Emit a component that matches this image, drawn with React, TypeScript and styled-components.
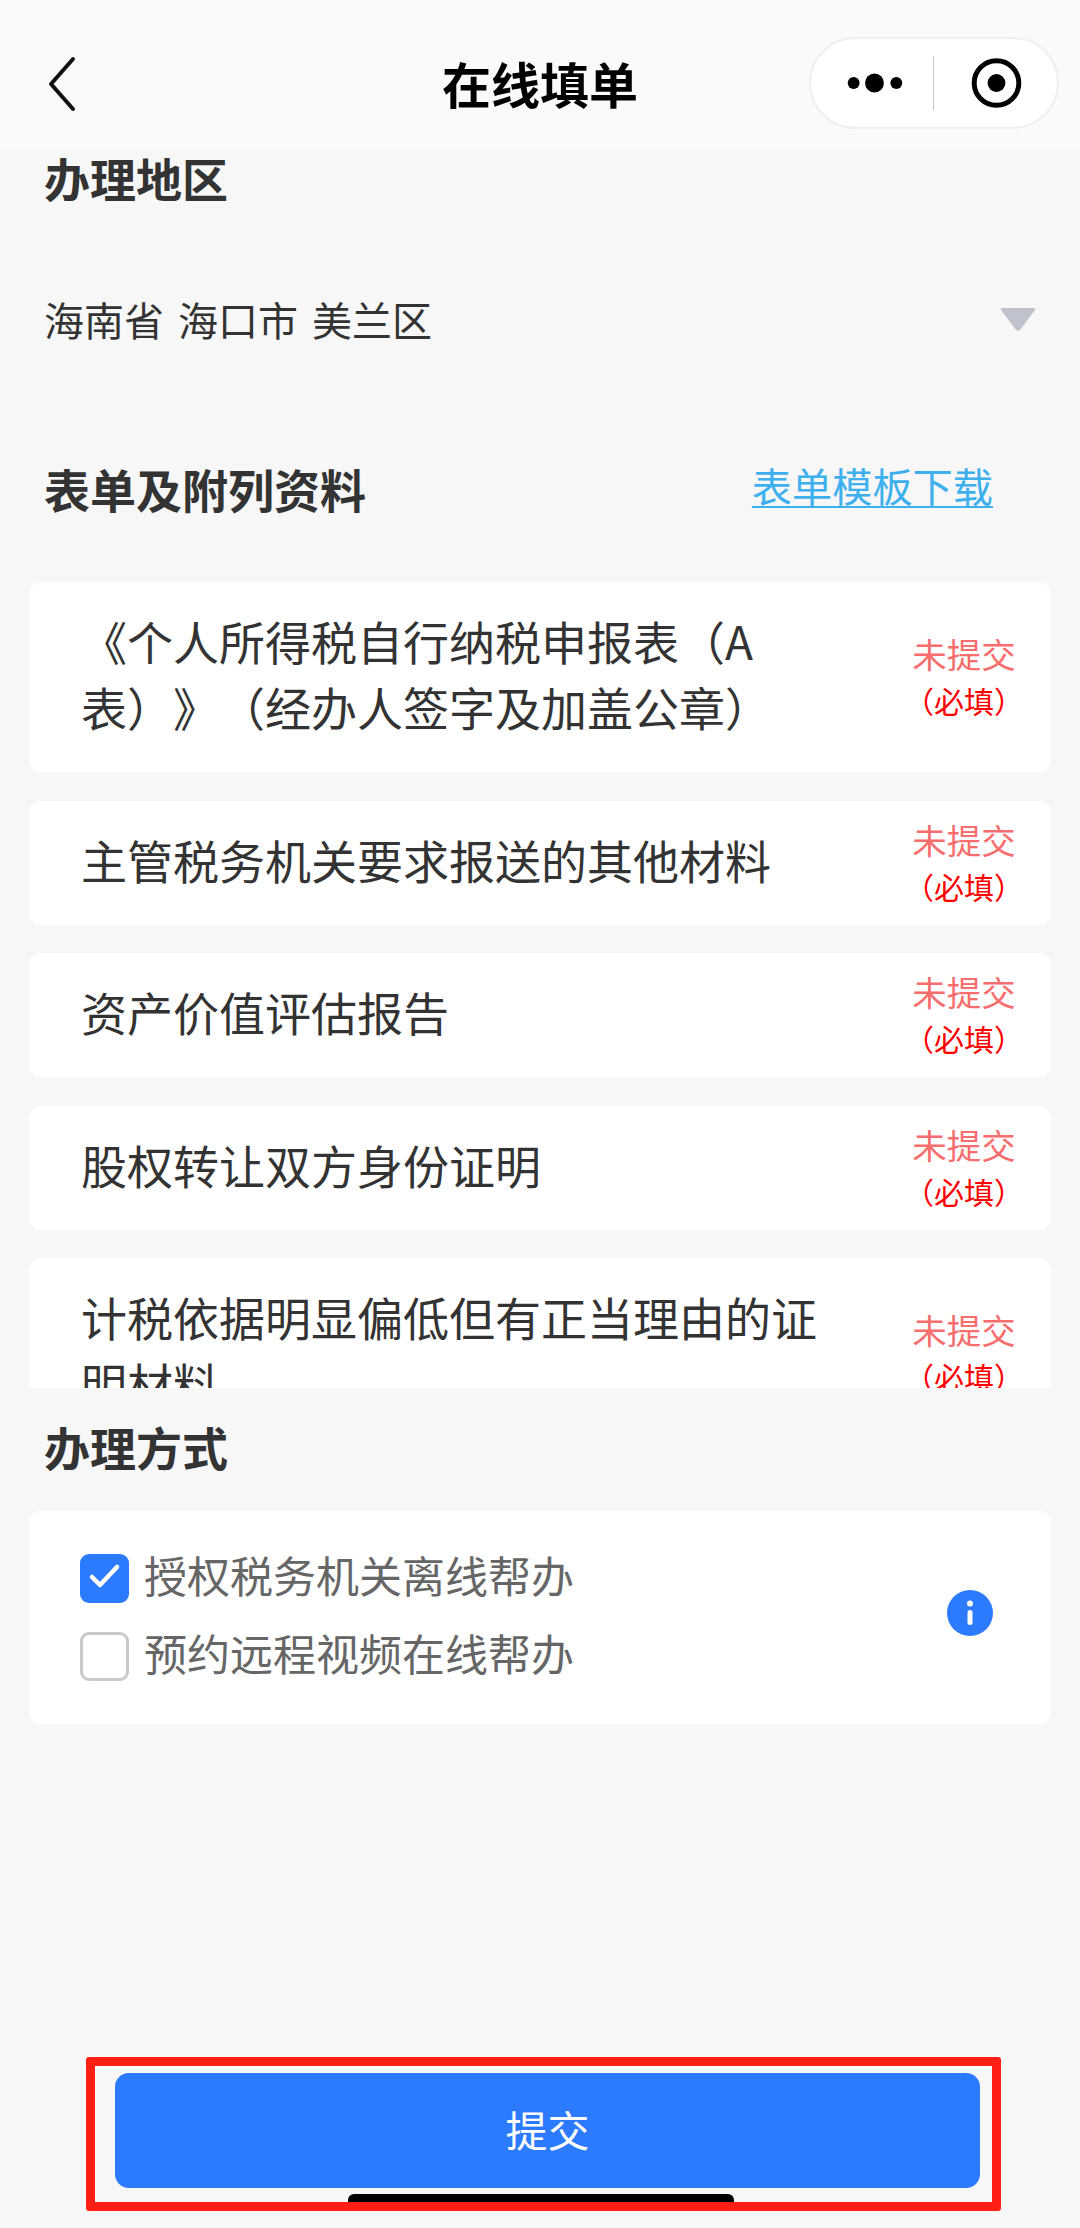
import React from "react";
import styled, { createGlobalStyle } from "styled-components";

const GlobalStyle = createGlobalStyle`
  html, body {
    margin: 0;
    padding: 0;
    background: #f7f7f7;
  }
  * {
    box-sizing: border-box;
  }
`;

const Page = styled.div`
  position: relative;
  display: flex;
  flex-direction: column;
  width: 1080px;
  height: 2228px;
  overflow: hidden;
  background: #f7f7f7;
  color: #333;
  font-family: "Noto Sans CJK SC", "Noto Sans", sans-serif;
  text-spacing-trim: space-all;
`;

const NavBar = styled.header`
  position: relative;
  flex: none;
  display: flex;
  align-items: center;
  justify-content: center;
  height: 148px;
  padding-top: 17px;
  background: #fafaf8;
`;

const NavTitle = styled.h1`
  margin: 0;
  font-size: 49px;
  line-height: 60px;
  font-weight: 700;
  color: #000;
`;

const BackIcon = styled.svg`
  position: absolute;
  left: 46px;
  top: 56px;
`;

const Capsule = styled.div`
  position: absolute;
  left: 809px;
  top: 37px;
  display: flex;
  align-items: center;
  width: 250px;
  height: 92px;
  background: #fff;
  border: 2px solid #efefef;
  border-radius: 46px;
`;

const CapsuleDivider = styled.span`
  width: 1px;
  height: 54px;
  margin-left: 1px;
  background: #c9c9c9;
`;

const SectionTitle = styled.h2`
  margin: 0;
  font-size: 46px;
  line-height: 46px;
  font-weight: 700;
  color: #333;
`;

const RegionTitle = styled(SectionTitle)`
  margin: 6px 0 0 44px;
`;

const SelectRow = styled.div`
  display: flex;
  align-items: center;
  justify-content: space-between;
  height: 44px;
  margin: 97px 44px 127px 44px;
  font-size: 40px;
  line-height: 44px;
  word-spacing: 5px;
`;

const FormHeader = styled.div`
  display: flex;
  align-items: center;
  justify-content: space-between;
  height: 46px;
  margin: 0 87px 68px 44px;
`;

const FormTitle = styled(SectionTitle)`
  position: relative;
  top: -3px;
`;

const TemplateLink = styled.a`
  position: relative;
  top: -6px;
  font-size: 40.2px;
  line-height: 46px;
  color: #3fb0ee;
  text-decoration: underline;
  text-underline-offset: 4px;
  text-decoration-thickness: 2px;
`;

const MaterialList = styled.div`
  display: flex;
  flex-direction: column;
  gap: 28.5px;
  height: 806px;
  margin: 0 29px;
  overflow: hidden;
`;

const MaterialCard = styled.div`
  flex: none;
  display: flex;
  align-items: center;
  padding: 15px 0 15px 52px;
  background: #fff;
  border-radius: 12px;
`;

const MaterialName = styled.div`
  width: 752px;
  padding: 10px 0 18px;
  font-size: 46px;
  line-height: 66px;
  color: #333;
`;

const Status = styled.div`
  display: flex;
  flex-direction: column;
  align-items: center;
  flex: none;
  width: 160px;
  margin-left: 51px;
`;

const StatusLabel = styled.span`
  font-size: 34.5px;
  line-height: 47px;
  color: #f86d6d;
`;

const RequiredLabel = styled.span`
  font-size: 30px;
  line-height: 47px;
  color: #ff0000;
`;

const MethodTitle = styled(SectionTitle)`
  margin: 35px 0 42px 44px;
`;

const MethodCard = styled.div`
  display: flex;
  align-items: center;
  justify-content: space-between;
  height: 213px;
  margin: 0 29px;
  padding: 0 58px 0 51px;
  background: #fff;
  border-radius: 12px;
`;

const MethodOptions = styled.div`
  display: flex;
  flex-direction: column;
  gap: 29px;
`;

const MethodOption = styled.label`
  display: flex;
  align-items: center;
  gap: 15px;
  height: 49px;
  font-size: 43px;
  line-height: 43px;
  color: #666;
`;

const OptionText = styled.span`
  position: relative;
  top: -4px;
`;

const InfoIcon = styled.svg`
  position: relative;
  top: -5px;
`;

const CheckBox = styled.span<{ $checked?: boolean }>`
  display: flex;
  flex: none;
  width: 49px;
  height: 49px;
  border-radius: 9px;
  background: ${(props) => (props.$checked ? "#2b7aff" : "#fff")};
  border: ${(props) => (props.$checked ? "none" : "3px solid #c9cacd")};
`;

const Footer = styled.footer`
  margin: auto 100px 40px 115px;
`;

const SubmitButton = styled.button`
  display: block;
  width: 100%;
  height: 115px;
  padding: 0 0 5px;
  border: none;
  border-radius: 14px;
  background: #2b7aff;
  color: #fff;
  font-family: inherit;
  font-size: 42px;
`;

const HomeIndicator = styled.div`
  position: absolute;
  left: 348px;
  top: 2194px;
  width: 386px;
  height: 12px;
  border-radius: 6px 6px 0 0;
  background: #000;
`;

const HighlightFrame = styled.div`
  position: absolute;
  left: 86px;
  top: 2057px;
  width: 915px;
  height: 154px;
  border: 9px solid #ff1f14;
  border-radius: 3px;
`;

const materials = [
  "《个人所得税自行纳税申报表（A表）》（经办人签字及加盖公章）",
  "主管税务机关要求报送的其他材料",
  "资产价值评估报告",
  "股权转让双方身份证明",
  "计税依据明显偏低但有正当理由的证明材料",
];

const App: React.FC = () => {
  return (
    <Page>
      <GlobalStyle />
      <NavBar>
        <BackIcon width="32" height="56" viewBox="0 0 32 56">
          <path
            d="M27 3 L5 28 L27 53"
            fill="none"
            stroke="#111"
            strokeWidth="4"
            strokeLinecap="round"
            strokeLinejoin="round"
          />
        </BackIcon>
        <NavTitle>在线填单</NavTitle>
        <Capsule>
          <svg width="122" height="40" viewBox="0 0 122 40">
            <circle cx="43" cy="20" r="6" fill="#000" />
            <circle cx="64" cy="20" r="9.5" fill="#000" />
            <circle cx="86" cy="20" r="6" fill="#000" />
          </svg>
          <CapsuleDivider />
          <svg width="124" height="60" viewBox="0 0 124 60">
            <circle cx="63" cy="30" r="22.5" fill="none" stroke="#000" strokeWidth="5" />
            <circle cx="63" cy="30" r="9" fill="#000" />
          </svg>
        </Capsule>
      </NavBar>

      <RegionTitle>办理地区</RegionTitle>
      <SelectRow>
        <span>海南省 海口市 美兰区</span>
        <svg width="36" height="24" viewBox="0 0 36 24">
          <path d="M2 1 H34 Q36 1 35 3 L20 23 Q18 24 16 23 L1 3 Q0 1 2 1 Z" fill="#c0c3ce" />
        </svg>
      </SelectRow>

      <FormHeader>
        <FormTitle>表单及附列资料</FormTitle>
        <TemplateLink>表单模板下载</TemplateLink>
      </FormHeader>

      <MaterialList>
        {materials.map((name) => (
          <MaterialCard key={name}>
            <MaterialName>{name}</MaterialName>
            <Status>
              <StatusLabel>未提交</StatusLabel>
              <RequiredLabel>（必填）</RequiredLabel>
            </Status>
          </MaterialCard>
        ))}
      </MaterialList>

      <MethodTitle>办理方式</MethodTitle>
      <MethodCard>
        <MethodOptions>
          <MethodOption>
            <CheckBox $checked>
              <svg width="49" height="49" viewBox="0 0 49 49">
                <path
                  d="M12 23 L20 31 L37 13"
                  fill="none"
                  stroke="#fff"
                  strokeWidth="4.5"
                  strokeLinecap="round"
                  strokeLinejoin="round"
                />
              </svg>
            </CheckBox>
            <OptionText>授权税务机关离线帮办</OptionText>
          </MethodOption>
          <MethodOption>
            <CheckBox />
            <OptionText>预约远程视频在线帮办</OptionText>
          </MethodOption>
        </MethodOptions>
        <InfoIcon width="46" height="46" viewBox="0 0 46 46">
          <circle cx="23" cy="23" r="23" fill="#2b7aff" />
          <circle cx="23" cy="13.5" r="3" fill="#fff" />
          <rect x="20.5" y="20" width="5" height="15" rx="2.5" fill="#fff" />
        </InfoIcon>
      </MethodCard>

      <Footer>
        <SubmitButton>提交</SubmitButton>
      </Footer>
      <HomeIndicator />
      <HighlightFrame />
    </Page>
  );
};

export default App;
